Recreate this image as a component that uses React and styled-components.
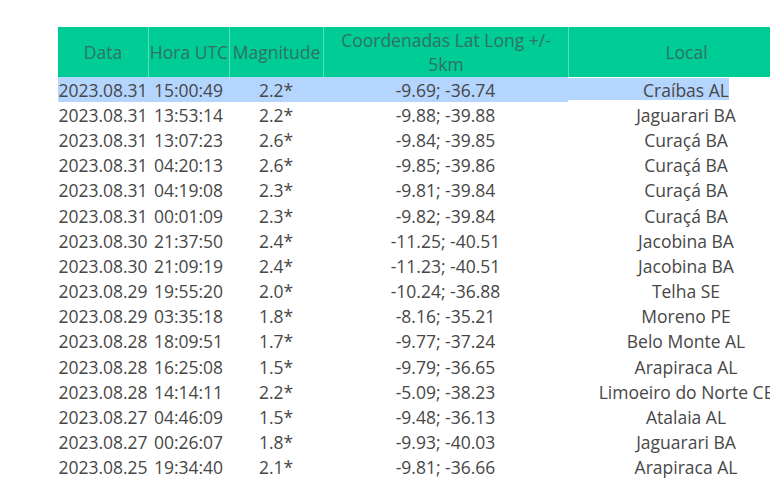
import React from "react";
import styled, { createGlobalStyle } from "styled-components";

const Global = createGlobalStyle`
  html, body { margin: 0; padding: 0; background: #fff; overflow: hidden; }
  body { font-family: "Open Sans", "Noto Sans", sans-serif; }
`;

const COLS = "90px 81px 94px 245px 236px";
const SEL = "#b4d5fe";

const Page = styled.div`
  width: 770px;
  height: 480px;
  overflow: hidden;
  padding: 27px 0 0 58px;
  box-sizing: border-box;
`;

const Table = styled.div`
  width: 746px;
  display: flex;
  flex-direction: column;
`;

const HeaderRow = styled.div`
  display: grid;
  grid-template-columns: ${COLS};
  height: 50px;
  background: #00cc96;
`;

const HeadCell = styled.div`
  display: flex;
  align-items: center;
  justify-content: center;
  text-align: center;
  font-size: 17.5px;
  line-height: 24px;
  color: #317260;
  white-space: nowrap;
  border-left: ${(p) => (p.$first ? "none" : "1px solid rgba(255,255,255,0.35)")};
  box-sizing: border-box;
`;

const Row = styled.div`
  display: grid;
  grid-template-columns: ${COLS};
  height: 25.2px;
`;

const Cell = styled.div`
  display: flex;
  align-items: center;
  justify-content: center;
  font-size: 17.5px;
  color: #474747;
  white-space: nowrap;
  background: ${(p) => (p.$sel ? SEL : "transparent")};
`;

const LocalCell = styled(Cell)`
  background: ${(p) =>
    p.$sel
      ? `linear-gradient(to right, ${SEL} 161px, transparent 161px) no-repeat 0 1px / 100% 22px`
      : "transparent"};
`;

const rows = [
  ["2023.08.31", "15:00:49", "2.2*", "-9.69; -36.74", "Craíbas AL"],
  ["2023.08.31", "13:53:14", "2.2*", "-9.88; -39.88", "Jaguarari BA"],
  ["2023.08.31", "13:07:23", "2.6*", "-9.84; -39.85", "Curaçá BA"],
  ["2023.08.31", "04:20:13", "2.6*", "-9.85; -39.86", "Curaçá BA"],
  ["2023.08.31", "04:19:08", "2.3*", "-9.81; -39.84", "Curaçá BA"],
  ["2023.08.31", "00:01:09", "2.3*", "-9.82; -39.84", "Curaçá BA"],
  ["2023.08.30", "21:37:50", "2.4*", "-11.25; -40.51", "Jacobina BA"],
  ["2023.08.30", "21:09:19", "2.4*", "-11.23; -40.51", "Jacobina BA"],
  ["2023.08.29", "19:55:20", "2.0*", "-10.24; -36.88", "Telha SE"],
  ["2023.08.29", "03:35:18", "1.8*", "-8.16; -35.21", "Moreno PE"],
  ["2023.08.28", "18:09:51", "1.7*", "-9.77; -37.24", "Belo Monte AL"],
  ["2023.08.28", "16:25:08", "1.5*", "-9.79; -36.65", "Arapiraca AL"],
  ["2023.08.28", "14:14:11", "2.2*", "-5.09; -38.23", "Limoeiro do Norte CE"],
  ["2023.08.27", "04:46:09", "1.5*", "-9.48; -36.13", "Atalaia AL"],
  ["2023.08.27", "00:26:07", "1.8*", "-9.93; -40.03", "Jaguarari BA"],
  ["2023.08.25", "19:34:40", "2.1*", "-9.81; -36.66", "Arapiraca AL"],
];

export default function App() {
  return (
    <Page>
      <Global />
      <Table>
        <HeaderRow>
          <HeadCell $first>Data</HeadCell>
          <HeadCell>Hora UTC</HeadCell>
          <HeadCell>Magnitude</HeadCell>
          <HeadCell>
            Coordenadas Lat Long +/-
            <br />
            5km
          </HeadCell>
          <HeadCell>Local</HeadCell>
        </HeaderRow>
        {rows.map((r, i) => {
          const sel = i === 0;
          return (
            <Row key={i}>
              <Cell $sel={sel}>{r[0]}</Cell>
              <Cell $sel={sel}>{r[1]}</Cell>
              <Cell $sel={sel}>{r[2]}</Cell>
              <Cell $sel={sel}>{r[3]}</Cell>
              <LocalCell $sel={sel}>{r[4]}</LocalCell>
            </Row>
          );
        })}
      </Table>
    </Page>
  );
}
